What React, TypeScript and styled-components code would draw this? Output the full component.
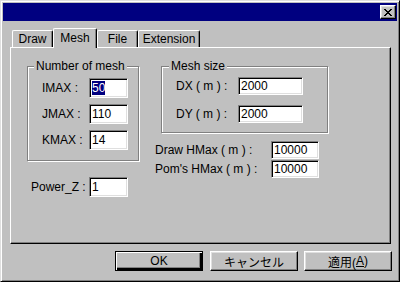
import React from 'react';
import styled, { createGlobalStyle } from 'styled-components';

const GlobalStyle = createGlobalStyle`
  html, body {
    margin: 0;
    padding: 0;
    background: #c0c0c0;
  }
  body {
    font-family: "Liberation Sans", "Noto Sans CJK JP", sans-serif;
    font-size: 12px;
    color: #000;
  }
`;

// window frame with the classic two-pixel bevel
const Window = styled.div`
  box-sizing: border-box;
  width: 400px;
  height: 282px;
  background: #c0c0c0;
  border: 1px solid;
  border-color: #dfdfdf #000 #000 #dfdfdf;
  box-shadow: inset 1px 1px #fff, inset -1px -1px #808080;
  padding: 2px;
  display: flex;
  flex-direction: column;
`;

const TitleBar = styled.div`
  height: 18px;
  flex: none;
  background: #000080;
  display: flex;
  justify-content: flex-end;
  align-items: center;
  padding-right: 1px;
`;

const CloseButton = styled.div`
  box-sizing: border-box;
  width: 16px;
  height: 14px;
  background: #c0c0c0;
  border: 1px solid;
  border-color: #fff #000 #000 #fff;
  box-shadow: inset -1px -1px #808080, inset 1px 1px #dfdfdf;
  display: flex;
  align-items: center;
  justify-content: center;
`;

const Body = styled.div`
  flex: 1;
  display: flex;
  flex-direction: column;
  padding: 7px 5px 0 7px;
`;

const TabStrip = styled.div`
  display: flex;
  align-items: flex-end;
  height: 19px;
  padding-left: 2px;
`;

const Tab = styled.div<{ $w: number; $active?: boolean }>`
  box-sizing: border-box;
  position: relative;
  z-index: ${(p) => (p.$active ? 1 : 0)};
  width: ${(p) => p.$w}px;
  height: ${(p) => (p.$active ? 20 : 17)}px;
  margin-bottom: ${(p) => (p.$active ? -1 : 0)}px;
  background: #c0c0c0;
  border-top: 1px solid #fff;
  border-left: 1px solid #fff;
  border-right: 1px solid #000;
  border-radius: 2px 2px 0 0;
  box-shadow: inset -1px 0 #808080;
  text-align: center;
  line-height: 14px;
  padding-top: ${(p) => (p.$active ? 2 : 1)}px;
`;

const Panel = styled.div`
  box-sizing: border-box;
  height: 197px;
  margin-right: 1px;
  border: 1px solid;
  border-color: #fff #000 #000 #fff;
  box-shadow: inset -1px -1px #808080;
  display: grid;
  grid-template-columns: 113px auto;
  column-gap: 15px;
  align-items: start;
  padding: 11px 0 0 16px;
`;

const Column = styled.div`
  display: flex;
  flex-direction: column;
  align-items: flex-start;
`;

const Group = styled.fieldset<{ $w: number; $pt: number; $pb: number; $gap: number; $ml?: number }>`
  box-sizing: border-box;
  margin: 0 0 0 ${(p) => p.$ml ?? 0}px;
  width: ${(p) => p.$w}px;
  min-width: 0;
  border: 1px solid #808080;
  box-shadow: inset 1px 1px #fff, 1px 1px #fff;
  padding: ${(p) => p.$pt}px 0 ${(p) => p.$pb}px 0;
  display: flex;
  flex-direction: column;
  gap: ${(p) => p.$gap}px;
`;

const Caption = styled.legend<{ $ml: number }>`
  margin-left: ${(p) => p.$ml}px;
  padding: 0 2px;
  line-height: 14px;
  background: #c0c0c0;
`;

const Row = styled.div<{ $h: number; $pl: number; $mt?: number }>`
  display: flex;
  align-items: center;
  height: ${(p) => p.$h}px;
  padding-left: ${(p) => p.$pl}px;
  margin-top: ${(p) => p.$mt ?? 0}px;
`;

const Label = styled.span<{ $w: number }>`
  width: ${(p) => p.$w}px;
  flex: none;
  white-space: pre;
`;

const Field = styled.div<{ $w: number; $h: number }>`
  box-sizing: border-box;
  width: ${(p) => p.$w}px;
  height: ${(p) => p.$h}px;
  background: #fff;
  border: 1px solid;
  border-color: #808080 #fff #fff #808080;
  box-shadow: inset 1px 1px #000, inset -1px -1px #dfdfdf;
  padding-left: 2px;
  display: flex;
  align-items: center;
  line-height: 14px;
`;

const Selected = styled.span`
  background: #000080;
  color: #fff;
`;

const ButtonRow = styled.div`
  display: flex;
  justify-content: flex-end;
  gap: 6px;
  margin-top: 7px;
`;

const Button = styled.div<{ $default?: boolean }>`
  box-sizing: border-box;
  width: 88px;
  height: 20px;
  background: #c0c0c0;
  border: 1px solid;
  border-color: ${(p) => (p.$default ? '#000' : '#fff #000 #000 #fff')};
  box-shadow: ${(p) =>
    p.$default
      ? 'inset 1px 1px #fff, inset -2px -2px #000, inset -3px -3px #808080'
      : 'inset -1px -1px #808080, inset 1px 1px #dfdfdf'};
  margin-right: ${(p) => (p.$default ? 1 : 0)}px;
  display: flex;
  align-items: center;
  justify-content: center;
`;

const Mnemonic = styled.span`
  text-decoration: underline;
`;

const CloseGlyph = () => (
  <svg width="8" height="7" viewBox="0 0 8 7" shapeRendering="crispEdges">
    <path
      fill="#000"
      d="M0 0h2v1h-2z M6 0h2v1h-2z M1 1h2v1h-2z M5 1h2v1h-2z M2 2h4v1h-4z M3 3h2v1h-2z M2 4h4v1h-4z M1 5h2v1h-2z M5 5h2v1h-2z M0 6h2v1h-2z M6 6h2v1h-2z"
    />
  </svg>
);

const meshRows = [
  { label: 'IMAX :', value: '50', selected: true },
  { label: 'JMAX :', value: '110' },
  { label: 'KMAX :', value: '14' },
];

const sizeRows = [
  { label: 'DX ( m ) :', value: '2000' },
  { label: 'DY ( m ) :', value: '2000' },
];

const hmaxRows = [
  { label: 'Draw HMax ( m ) :', value: '10000' },
  { label: "Pom's HMax ( m ) :", value: '10000' },
];

export default function App() {
  return (
    <>
      <GlobalStyle />
      <Window>
        <TitleBar>
          <CloseButton>
            <CloseGlyph />
          </CloseButton>
        </TitleBar>
        <Body>
          <TabStrip>
            <Tab $w={41}>Draw</Tab>
            <Tab $w={44} $active>
              Mesh
            </Tab>
            <Tab $w={41}>File</Tab>
            <Tab $w={62}>Extension</Tab>
          </TabStrip>
          <Panel>
            <Column>
              <Group $w={112} $pt={5} $pb={10} $gap={6}>
                <Caption $ml={6}>Number of mesh</Caption>
                {meshRows.map((r) => (
                  <Row key={r.label} $h={20} $pl={14}>
                    <Label $w={47}>{r.label}</Label>
                    <Field $w={39} $h={20}>
                      {r.selected ? <Selected>{r.value}</Selected> : r.value}
                    </Field>
                  </Row>
                ))}
              </Group>
              <Row $h={20} $pl={4} $mt={16}>
                <Label $w={58}>Power_Z :</Label>
                <Field $w={39} $h={20}>
                  1
                </Field>
              </Row>
            </Column>
            <Column>
              <Group $w={167} $ml={6} $pt={4} $pb={9} $gap={10}>
                <Caption $ml={7}>Mesh size</Caption>
                {sizeRows.map((r) => (
                  <Row key={r.label} $h={18} $pl={14}>
                    <Label $w={62}>{r.label}</Label>
                    <Field $w={65} $h={18}>
                      {r.value}
                    </Field>
                  </Row>
                ))}
              </Group>
              {hmaxRows.map((r, i) => (
                <Row key={r.label} $h={18} $pl={0} $mt={i === 0 ? 8 : 1}>
                  <Label $w={116}>{r.label}</Label>
                  <Field $w={48} $h={18}>
                    {r.value}
                  </Field>
                </Row>
              ))}
            </Column>
          </Panel>
          <ButtonRow>
            <Button $default>OK</Button>
            <Button>キャンセル</Button>
            <Button>
              適用(<Mnemonic>A</Mnemonic>)
            </Button>
          </ButtonRow>
        </Body>
      </Window>
    </>
  );
}
